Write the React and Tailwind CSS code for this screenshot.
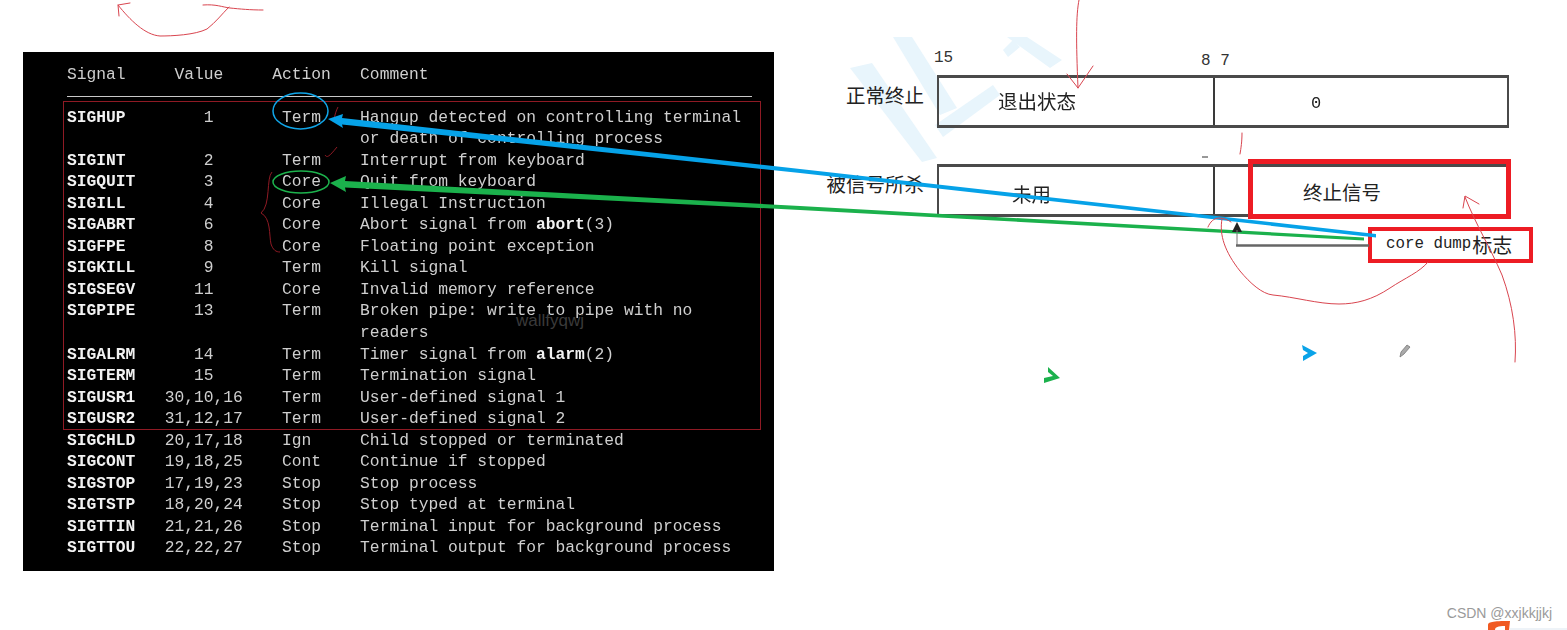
const rows = [
  ["SIGHUP", "1", "Term", ["Hangup detected on controlling terminal"]],
  ["", "", "", ["or death of controlling process"]],
  ["SIGINT", "2", "Term", ["Interrupt from keyboard"]],
  ["SIGQUIT", "3", "Core", ["Quit from keyboard"]],
  ["SIGILL", "4", "Core", ["Illegal Instruction"]],
  ["SIGABRT", "6", "Core", ["Abort signal from ", { b: "abort" }, "(3)"]],
  ["SIGFPE", "8", "Core", ["Floating point exception"]],
  ["SIGKILL", "9", "Term", ["Kill signal"]],
  ["SIGSEGV", "11", "Core", ["Invalid memory reference"]],
  ["SIGPIPE", "13", "Term", ["Broken pipe: write to pipe with no"]],
  ["", "", "", ["readers"]],
  ["SIGALRM", "14", "Term", ["Timer signal from ", { b: "alarm" }, "(2)"]],
  ["SIGTERM", "15", "Term", ["Termination signal"]],
  ["SIGUSR1", "30,10,16", "Term", ["User-defined signal 1"]],
  ["SIGUSR2", "31,12,17", "Term", ["User-defined signal 2"]],
  ["SIGCHLD", "20,17,18", "Ign", ["Child stopped or terminated"]],
  ["SIGCONT", "19,18,25", "Cont", ["Continue if stopped"]],
  ["SIGSTOP", "17,19,23", "Stop", ["Stop process"]],
  ["SIGTSTP", "18,20,24", "Stop", ["Stop typed at terminal"]],
  ["SIGTTIN", "21,21,26", "Stop", ["Terminal input for background process"]],
  ["SIGTTOU", "22,22,27", "Stop", ["Terminal output for background process"]],
];

const cjk = "font-['Noto_Sans_CJK_SC',sans-serif]";

function Terminal() {
  return (
    <div className="relative ml-[23px] mt-[52px] h-[519px] w-[751px] shrink-0 bg-black pl-[44px] pt-[12px] font-['Liberation_Mono',monospace] text-[16.3px] leading-[21.55px] text-[#cfcfcf] blur-[0.4px]">
      <div className="flex whitespace-pre">
        <div className="w-[10ch]">Signal</div>
        <div className="w-[11ch]"> Value</div>
        <div className="w-[9ch]">Action</div>
        <div>Comment</div>
      </div>
      <div className="mb-[10px] mt-[10px] h-px w-[685px] bg-[#c8c8c8]" />
      {rows.map((r, i) => (
        <div key={i} className="flex h-[21.55px] whitespace-pre">
          <div className="w-[10ch] font-bold text-[#f2f2f2]">{r[0]}</div>
          <div className="w-[11ch]">{r[1].padStart(r[1].length > 2 ? 0 : 5)}</div>
          <div className="w-[9ch] pl-[1ch]">{r[2]}</div>
          <div>
            {r[3].map((p, j) =>
              typeof p === "string" ? (
                <span key={j}>{p}</span>
              ) : (
                <span key={j} className="font-bold text-[#f2f2f2]">{p.b}</span>
              )
            )}
          </div>
        </div>
      ))}
    </div>
  );
}

function Box({ label, left, leftPad, leftTop, right, rightPad, rightTop }) {
  return (
    <div className="flex h-[52px] items-center">
      <div className={`w-[150px] pb-[12px] text-right text-[19.5px] leading-none text-[#222] ${cjk}`}>{label}</div>
      <div className="ml-[13px] flex h-[53px] w-[572px] border-y-[3px] border-x-2 border-[#4a4a4a] blur-[0.6px]">
        <div className="flex w-[276px] items-center border-r-2 border-[#3a3a3a]" style={{ paddingLeft: leftPad, paddingTop: leftTop }}>
          <span className={`text-[19.5px] leading-none text-[#222] ${cjk}`}>{left}</span>
        </div>
        <div className="flex flex-1 items-center" style={{ paddingLeft: rightPad, paddingTop: rightTop }}>
          <span className="font-['Liberation_Mono',monospace] text-[17px] leading-none text-[#222]">{right}</span>
        </div>
      </div>
    </div>
  );
}

function Diagram() {
  return (
    <div className="flex w-[793px] flex-col">
      <div className="relative mt-[50px] h-[25px] font-['Liberation_Mono',monospace] text-[16px] leading-[20px] text-[#333]">
        <span className="absolute left-[160px] top-[-2px]">15</span>
        <span className="absolute left-[427px] top-[1px] whitespace-pre">8 7</span>
      </div>
      <Box label="正常终止" left="退出状态" leftPad={59} leftTop={0} right="0" rightPad={96} rightTop={5} />
      <div className="h-[37px]" />
      <Box label="被信号所杀" left="未用" leftPad={73} leftTop={8} right="" rightPad={0} />
      <div className="relative">
        <div className="absolute left-[474px] top-[-57px] flex h-[60px] w-[263px] items-center border-[5px] border-[#ed1c24] pl-[50px] pt-[5px]">
          <span className={`text-[19.5px] leading-none text-[#222] ${cjk}`}>终止信号</span>
        </div>
        <div className="absolute left-[594px] top-[11px] flex h-[36px] w-[165px] items-center whitespace-pre border-[4px] border-[#ed1c24] pl-[14px] font-['Liberation_Mono',monospace] text-[15.8px] leading-none text-[#222]">
          core dump<span className={`ml-[1px] text-[20px] ${cjk}`}>标志</span>
        </div>
      </div>
    </div>
  );
}

function Overlay() {
  const red = { fill: "none", stroke: "#d9454f", strokeWidth: 1, strokeLinecap: "round", strokeLinejoin: "round" };
  const dark = { fill: "none", stroke: "#8f1a24", strokeWidth: 1 };
  return (
    <svg className="pointer-events-none absolute left-0 top-0" width="1567" height="630" viewBox="0 0 1567 630">
      {/* terminal red frame and marks */}
      <rect x="63.5" y="101.5" width="697" height="328" {...dark} />
      <path d="M338 107C336 111 335 114 334 120" {...dark} />
      <path d="M325 155C327 158 329 157 337 147" {...dark} />
      <path d="M272 172C266 178 271 205 261 213C271 218 269 235 271 244C273 250 276 252 280 252" {...dark} />

      {/* blue and green arrows */}
      <ellipse cx="300.5" cy="111" rx="27.5" ry="18" fill="none" stroke="#10a5e8" strokeWidth="1.5" />
      <ellipse cx="301" cy="182" rx="28" ry="11" fill="none" stroke="#1db34d" strokeWidth="1.5" />
      <polygon points="328,119 343,114 342,118 800,169 1376,234 1376,237.5 800,173 342,124.5 343,128" fill="#06a2e8" />
      <polygon points="330,183 346,176 345,181 800,206 1364,237.5 1364,240.5 800,210 345,187.5 346,192" fill="#1bb14c" />

      {/* red pen strokes */}
      <path d="M1079 0C1076 15 1076 40 1078 88" {...red} />
      <path d="M1067 74L1078 88L1093 66" {...red} />
      <path d="M1242 133C1242 142 1241 148 1240 154" {...red} />
      <path d="M1208 227C1210 222 1214 218 1219 218C1224 218 1228 220 1231 222" {...red} />
      <path d="M1222 219C1219 235 1225 252 1240 271C1250 283 1262 294 1273 295C1295 297 1318 304 1339 304C1356 304 1372 300 1390 288C1405 278 1420 272 1428 262" {...red} />
      <path d="M1515 362C1517 335 1513 305 1502 275C1490 247 1476 225 1465 197" {...red} />
      <path d="M1463 208L1465 196L1479 204" {...red} />
      <path d="M263 10C250 10 240 9 230 8C222 7 216 4 203 5" {...red} />
      <path d="M229 7C222 14 216 22 207 29C195 35 172 36 160 36C145 35 130 20 118 5" {...red} />
      <path d="M130 3L118 5L119 16" {...red} />

      {/* cursor marks */}
      <polygon points="1302,345 1317,353 1303,361 1303,356 1308,353 1303,350" fill="#0aa3e8" />
      <polygon points="1048,367 1060,378 1044,383 1044,378 1053,376 1048,372" fill="#1bb14c" />
      <path d="M1400 357L1401 352L1407 345L1410 347L1404 354Z" fill="#aaa" stroke="#777" strokeWidth="0.8" />

      {/* arrow up and its line */}
      <polygon points="1237,222 1242,232 1232,232" fill="#222" />
      <line x1="1237" y1="230" x2="1237" y2="245" stroke="#777" strokeWidth="1" />
      <line x1="1236" y1="245.5" x2="1369" y2="245.5" stroke="#666" strokeWidth="2.5" />
      <line x1="1202" y1="157" x2="1208" y2="157" stroke="#333" strokeWidth="1" />

      {/* small logo at bottom right */}
      <path d="M1488 630L1488 625C1488 622 1492 621 1510 621L1509 630Z" fill="#f05a22" />
      <path d="M1495 630C1495 627 1498 626 1505 626L1505 630Z" fill="#fff" />
      <rect x="1510" y="628" width="57" height="2" fill="#eef3f8" />
    </svg>
  );
}

function Watermark() {
  return (
    <svg className="absolute left-0 top-0" width="1567" height="630" viewBox="0 0 1567 630">
      <g fill="#e8f5fc">
        <polygon points="850,68 872,63 937,158 922,162" />
        <polygon points="893,37 912,37 957,108 940,115" />
        <polygon points="935,125 943,137 1000,95 993,85" />
        <polygon points="1007,37 1027,37 1062,60 1050,68" />
        <polygon points="1003,50 1013,40 1020,47 1008,57" />
      </g>
    </svg>
  );
}

export default function App() {
  return (
    <div className="relative flex h-[630px] w-[1567px] items-start overflow-hidden bg-white">
      <Watermark />
      <Terminal />
      <div className="relative">
        <Diagram />
      </div>
      <Overlay />
      <div className="absolute left-[516px] top-[311px] font-['Liberation_Sans',sans-serif] text-[17px] leading-5 text-[#3a3a3a]">wallfyqwj</div>
      <div className="absolute bottom-[9px] right-[15px] font-['Liberation_Sans',sans-serif] text-[14px] leading-4 text-[#9a9a9a]">CSDN @xxjkkjjkj</div>
    </div>
  );
}
